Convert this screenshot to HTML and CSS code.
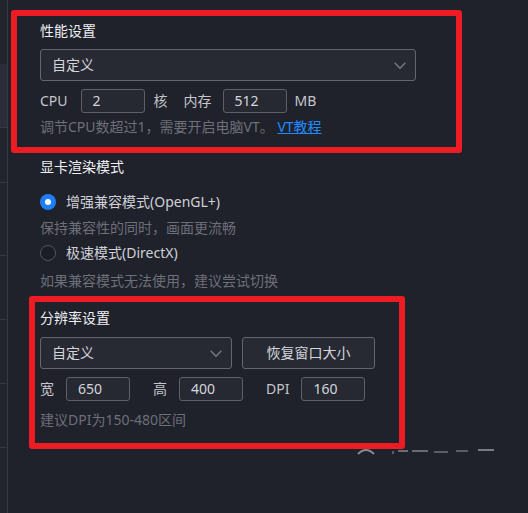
FILE: index.html
```html
<!DOCTYPE html>
<html lang="zh-CN">
<head>
<meta charset="utf-8">
<title>设置</title>
<link rel="stylesheet" href="styles.css">
</head>
<body>
<div class="app">
  <aside class="sidebar">
    <div class="nav nav-1"></div>
    <div class="nav nav-2 active"></div>
    <div class="nav nav-3"></div>
    <div class="nav nav-4"></div>
    <div class="nav nav-5"></div>
    <div class="nav nav-6"></div>
    <div class="nav nav-7"></div>
    <div class="nav nav-8"></div>
  </aside>
  <main class="panel">
    <div class="title t1">性能设置</div>
    <div class="select wide">
      <span>自定义</span>
      <svg class="chev" width="12" height="8" viewBox="0 0 12 8"><path d="M0.7 0.8 L6 6.3 L11.3 0.8" fill="none" stroke="#7b7d86" stroke-width="1.3"/></svg>
    </div>
    <div class="row r1">
      <span class="label">CPU</span>
      <div class="input in-cpu">2</div>
      <span class="label l-he">核</span>
      <span class="label l-mem">内存</span>
      <div class="input in-mem">512</div>
      <span class="label l-mb">MB</span>
    </div>
    <div class="hint h1">调节CPU数超过1，需要开启电脑VT。 <a class="link" href="#">VT教程</a></div>

    <div class="title t2">显卡渲染模式</div>
    <div class="radio-row rr1">
      <span class="radio checked"></span>
      <span class="radio-text">增强兼容模式(OpenGL+)</span>
    </div>
    <div class="hint h2">保持兼容性的同时，画面更流畅</div>
    <div class="radio-row rr2">
      <span class="radio"></span>
      <span class="radio-text">极速模式(DirectX)</span>
    </div>
    <div class="hint h3">如果兼容模式无法使用，建议尝试切换</div>

    <div class="title t3">分辨率设置</div>
    <div class="row r2">
      <div class="select narrow">
        <span>自定义</span>
        <svg class="chev" width="12" height="8" viewBox="0 0 12 8"><path d="M0.7 0.8 L6 6.3 L11.3 0.8" fill="none" stroke="#7b7d86" stroke-width="1.3"/></svg>
      </div>
      <div class="button">恢复窗口大小</div>
    </div>
    <div class="row r3">
      <span class="label">宽</span>
      <div class="input in-w">650</div>
      <span class="label l-h">高</span>
      <div class="input in-h">400</div>
      <span class="label l-dpi">DPI</span>
      <div class="input in-dpi">160</div>
    </div>
    <div class="hint h4">建议DPI为150-480区间</div>
  </main>
</div>

<div class="mark mark-1"></div>
<div class="mark mark-2"></div>

<svg class="watermark" width="150" height="10" viewBox="0 0 150 10">
  <path d="M6 9 Q14 1 22 9" fill="none" stroke="#8a8c94" stroke-width="2"/>
  <rect x="40" y="6" width="2" height="3" fill="#5a5c66"/>
  <rect x="46" y="5" width="10" height="2" fill="#6a6c74"/>
  <rect x="60" y="5" width="16" height="2" fill="#6a6c74"/>
  <rect x="82" y="6" width="14" height="2" fill="#5a5c66"/>
  <rect x="104" y="5" width="12" height="2" fill="#5a5c66"/>
  <rect x="126" y="4" width="16" height="2" fill="#7a7c84"/>
</svg>
</body>
</html>
```
FILE: styles.css
```css
* { box-sizing: border-box; }

html, body {
  margin: 0;
  padding: 0;
  width: 528px;
  height: 513px;
  overflow: hidden;
  background: #1f212b;
}

body {
  font-family: "Noto Sans", "Noto Sans CJK SC", sans-serif;
  font-size: 14px;
  line-height: 20px;
  color: #c9cbd1;
}

.app {
  display: flex;
  height: 513px;
}

.sidebar {
  width: 8px;
  flex: none;
  background: #21232d;
  border-right: 1px solid #363843;
  display: flex;
  flex-direction: column;
}

.nav { border-bottom: 1px solid #363843; flex: none; }
.nav-1 { height: 64px; border-bottom: none; }
.nav-2 { height: 64px; }
.nav-3 { height: 55px; }
.nav-4 { height: 73px; }
.nav-5 { height: 64px; }
.nav-6 { height: 64px; }
.nav-7 { height: 64px; }
.nav-8 { flex: 1; border-bottom: none; }
.nav.active { background: #2b2d38; }

.panel {
  flex: 1;
  padding: 21px 0 0 32px;
  display: flex;
  flex-direction: column;
  align-items: flex-start;
}

.title {
  color: #eeeff2;
  height: 20px;
}
.t2 { margin-top: 20px; }
.t3 { margin-top: 17px; }

.select {
  height: 32px;
  border: 1px solid #64666f;
  border-radius: 3px;
  background: #272933;
  display: flex;
  align-items: center;
  justify-content: space-between;
  padding: 0 9px 0 11px;
  color: #d4d6db;
}
.select.wide { width: 376px; margin-top: 8px; }
.select.narrow { width: 192px; }
.chev { display: block; margin-top: 1px; }

.row {
  display: flex;
  align-items: center;
}
.r1 { margin-top: 8px; height: 24px; }
.r2 { margin-top: 9px; height: 32px; }
.r3 { margin-top: 8px; height: 24px; }

.label { color: #c4c6cc; }

.input {
  width: 64px;
  height: 24px;
  border: 1px solid #5e6069;
  border-radius: 3px;
  background: #262832;
  padding: 0 0 0 11px;
  display: flex;
  align-items: center;
  color: #d4d6db;
  font-size: 14px;
}
.in-cpu { margin-left: 13px; }
.l-he { margin-left: 9px; }
.l-mem { margin-left: 16px; }
.in-mem { margin-left: 11px; }
.l-mb { margin-left: 8px; }

.in-w { margin-left: 12px; }
.l-h { margin-left: 23px; }
.in-h { margin-left: 12px; }
.l-dpi { margin-left: 23px; }
.in-dpi { margin-left: 12px; }

.button {
  width: 133px;
  height: 32px;
  margin-left: 10px;
  border: 1px solid #64666f;
  border-radius: 3px;
  background: #272933;
  display: flex;
  align-items: center;
  justify-content: center;
  color: #d4d6db;
}

.hint {
  color: #6d6f79;
  height: 20px;
  white-space: nowrap;
}
.h1 { margin-top: 4px; }
.h2 { margin-top: 6px; }
.h3 { margin-top: 8px; }
.h4 { margin-top: 9px; }

.link {
  color: #1f8bff;
  text-decoration: underline;
}

.radio-row {
  display: flex;
  align-items: center;
  height: 20px;
}
.rr1 { margin-top: 15px; }
.rr2 { margin-top: 5px; }

.radio {
  width: 16px;
  height: 16px;
  border-radius: 50%;
  border: 1.5px solid #52545e;
  background: #1b1d25;
  flex: none;
  display: flex;
  align-items: center;
  justify-content: center;
}
.radio.checked {
  border: none;
  background: #1e7ef5;
}
.radio.checked::after {
  content: "";
  width: 6px;
  height: 6px;
  border-radius: 50%;
  background: #ffffff;
}
.radio-text {
  margin-left: 10px;
  color: #cfd1d6;
}

.mark {
  position: absolute;
  border: 6px solid #ed1c24;
  border-radius: 3px;
  pointer-events: none;
}
.mark-1 { left: 11px; top: 10px; width: 451px; height: 143px; }
.mark-2 { left: 29px; top: 296px; width: 376px; height: 153px; }

.watermark {
  position: absolute;
  left: 352px;
  top: 445px;
}
```
